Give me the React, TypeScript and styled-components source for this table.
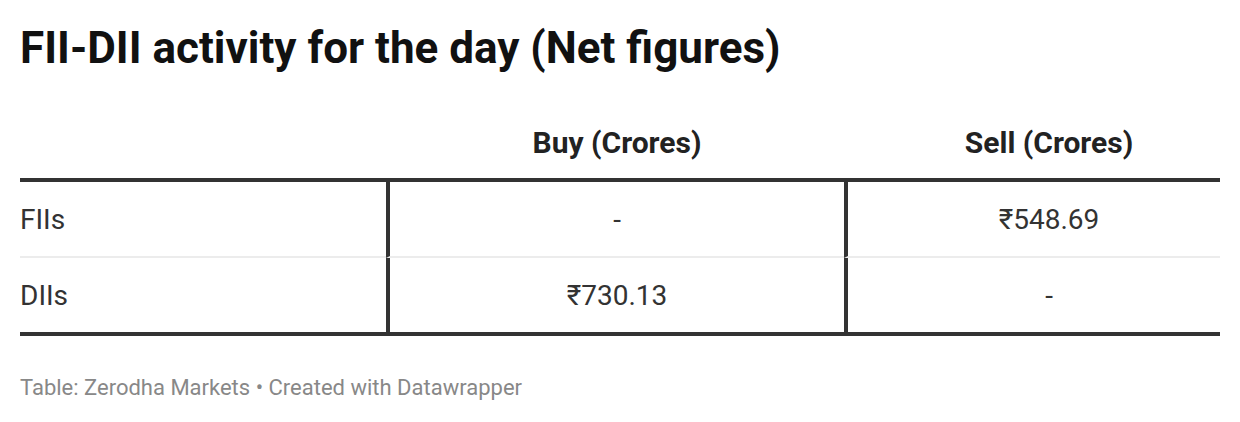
import React from "react";
import styled, { createGlobalStyle } from "styled-components";

const GlobalStyle = createGlobalStyle`
  html, body {
    margin: 0;
    padding: 0;
    background: #ffffff;
    font-family: Roboto, "Liberation Sans", Arial, sans-serif;
  }
`;

const Wrapper = styled.div`
  width: 1200px;
  padding: 22px 20px 0 20px;
`;

const Title = styled.h1`
  margin: 0;
  font-size: 44px;
  line-height: 52px;
  font-weight: 700;
  color: #111111;
`;

const Table = styled.div`
  margin-top: 46px;
  display: grid;
  grid-template-columns: 366px 458px 376px;
  border-bottom: 4px solid #333333;
`;

const HeadCell = styled.div<{ $first?: boolean; $last?: boolean }>`
  font-size: 30px;
  font-weight: 700;
  color: #222222;
  text-align: center;
  height: 58px;
  line-height: 46px;
  border-bottom: 4px solid #333333;
  padding-left: ${(p) => (p.$first ? "0" : p.$last ? "34px" : "4px")};
`;

const Cell = styled.div<{ $first?: boolean; $last?: boolean; $sep?: boolean }>`
  height: 74px;
  display: flex;
  align-items: center;
  justify-content: ${(p) => (p.$first ? "flex-start" : "center")};
  font-size: 28px;
  color: #333333;
  border-left: ${(p) => (p.$first ? "none" : "4px solid #333333")};
  border-bottom: ${(p) => (p.$sep ? "2px solid #ececec" : "none")};
  padding-left: ${(p) => (p.$last ? "30px" : "0")};
`;

const Footer = styled.div`
  margin-top: 39px;
  font-size: 22px;
  line-height: 26px;
  color: #888888;
`;

const rows = [
  { name: "FIIs", buy: "-", sell: "₹548.69" },
  { name: "DIIs", buy: "₹730.13", sell: "-" },
];

export default function App() {
  return (
    <>
      <GlobalStyle />
      <Wrapper>
        <Title>FII-DII activity for the day (Net figures)</Title>
        <Table>
          <HeadCell $first />
          <HeadCell>Buy (Crores)</HeadCell>
          <HeadCell $last>Sell (Crores)</HeadCell>
          {rows.map((r, i) => {
            const sep = i < rows.length - 1;
            return (
              <React.Fragment key={r.name}>
                <Cell $first $sep={sep}>{r.name}</Cell>
                <Cell $sep={sep}>{r.buy}</Cell>
                <Cell $last $sep={sep}>{r.sell}</Cell>
              </React.Fragment>
            );
          })}
        </Table>
        <Footer>Table: Zerodha Markets • Created with Datawrapper</Footer>
      </Wrapper>
    </>
  );
}
